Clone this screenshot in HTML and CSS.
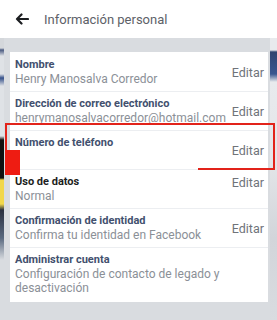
FILE: index.html
```html
<!DOCTYPE html>
<html lang="es">
<head>
    <meta charset="UTF-8">
    <meta name="viewport" content="width=device-width, initial-scale=1.0">
    <title>Información personal</title>
    <link rel="stylesheet" href="styles.css">
</head>
<body>
    <div class="header">
        <svg class="back" width="14" height="12" viewBox="0 0 14 12">
            <path d="M13 6H2M6.5 1.5L2 6l4.5 4.5" fill="none" stroke="#1c1e21" stroke-width="2.2" stroke-linecap="round" stroke-linejoin="round"/>
        </svg>
        <span class="title">Información personal</span>
    </div>

    <div class="main">
        <div class="edge-left"></div>
        <div class="panel">
            <div class="card">
                <div class="row">
                    <div class="info">
                        <div class="label">Nombre</div>
                        <div class="value">Henry Manosalva Corredor</div>
                    </div>
                    <span class="edit">Editar</span>
                </div>
                <div class="row">
                    <div class="info">
                        <div class="label">Dirección de correo electrónico</div>
                        <div class="value">henrymanosalvacorredor@hotmail.com</div>
                    </div>
                    <span class="edit">Editar</span>
                </div>
                <div class="row">
                    <div class="info">
                        <div class="label">Número de teléfono</div>
                        <div class="value">&nbsp;</div>
                    </div>
                    <span class="edit">Editar</span>
                </div>
                <div class="row">
                    <div class="info">
                        <div class="label dark">Uso de datos</div>
                        <div class="value">Normal</div>
                    </div>
                    <span class="edit top">Editar</span>
                </div>
                <div class="row">
                    <div class="info">
                        <div class="label">Confirmación de identidad</div>
                        <div class="value">Confirma tu identidad en Facebook</div>
                    </div>
                    <span class="edit">Editar</span>
                </div>
                <div class="row">
                    <div class="info">
                        <div class="label">Administrar cuenta</div>
                        <div class="value">Configuración de contacto de legado y desactivación</div>
                    </div>
                </div>
            </div>
        </div>
        <div class="edge-right"></div>
    </div>

    <!-- marcas rojas del video -->
    <div class="mark"></div>
    <div class="mark-line"></div>
    <div class="mark-block"></div>
</body>
</html>
```

FILE: styles.css
```css
body {
    margin: 0;
    width: 277px;
    height: 320px;
    overflow: hidden;
    font-family: Roboto, "Liberation Sans", sans-serif;
    background: #d9dce0;
    position: relative;
}
.header {
    height: 38px;
    background: #ffffff;
    display: flex;
    align-items: center;
    padding-left: 15px;
}
.back {
    margin-right: 15px;
}
.title {
    font-size: 13px;
    color: #5d6168;
}
.main {
    display: flex;
    height: 282px;
}
.edge-left {
    width: 4px;
    background: linear-gradient(#d4d7db 0, #d4d7db 10px, #4a5a80 12px, #dfe2e6 18px, #dfe2e6 36px, #35508a 40px, #dfe2e6 48px, #dfe2e6 98px, #111 102px, #111 140px, #f1d74a 142px, #f1d74a 166px, #2a3040 172px, #5a6a80 200px, #d9dce0 222px);
}
.edge-right {
    width: 7px;
    background: linear-gradient(#e8eaed 0, #e8eaed 12px, #2f4470 14px, #3a5690 36px, #e8eaed 44px, #e4e6e9 120px, #d2d5da 200px, #d9dce0 282px);
}
.panel {
    flex: 1;
    padding: 14px 2px 0 6px;
}
.card {
    background: #ffffff;
    padding-top: 1px;
}
.row {
    display: flex;
    align-items: center;
    padding: 5px 4px 5px 5px;
    border-bottom: 1px solid #eceef1;
}
.row:last-child {
    border-bottom: none;
    padding-bottom: 7px;
}
.info {
    flex: 1;
    min-width: 0;
}
.label {
    font-size: 11px;
    font-weight: bold;
    line-height: 14px;
    color: #42506e;
}
.label.dark {
    color: #1c1e21;
}
.value {
    font-size: 12px;
    line-height: 14px;
    color: #8b9097;
    white-space: nowrap;
}
.row:last-child .value {
    white-space: normal;
}
.edit {
    font-size: 12.5px;
    color: #6f737a;
}
.edit.top {
    align-self: flex-start;
}
.mark {
    position: absolute;
    left: 5px;
    top: 123px;
    width: 266px;
    height: 45px;
    border: 2px solid #e2231a;
    border-bottom: none;
}
.mark-line {
    position: absolute;
    left: 198px;
    top: 168px;
    width: 75px;
    height: 2px;
    background: #e2231a;
}
.mark-block {
    position: absolute;
    left: 5px;
    top: 150px;
    width: 15px;
    height: 25px;
    background: #ee1c12;
}
```
